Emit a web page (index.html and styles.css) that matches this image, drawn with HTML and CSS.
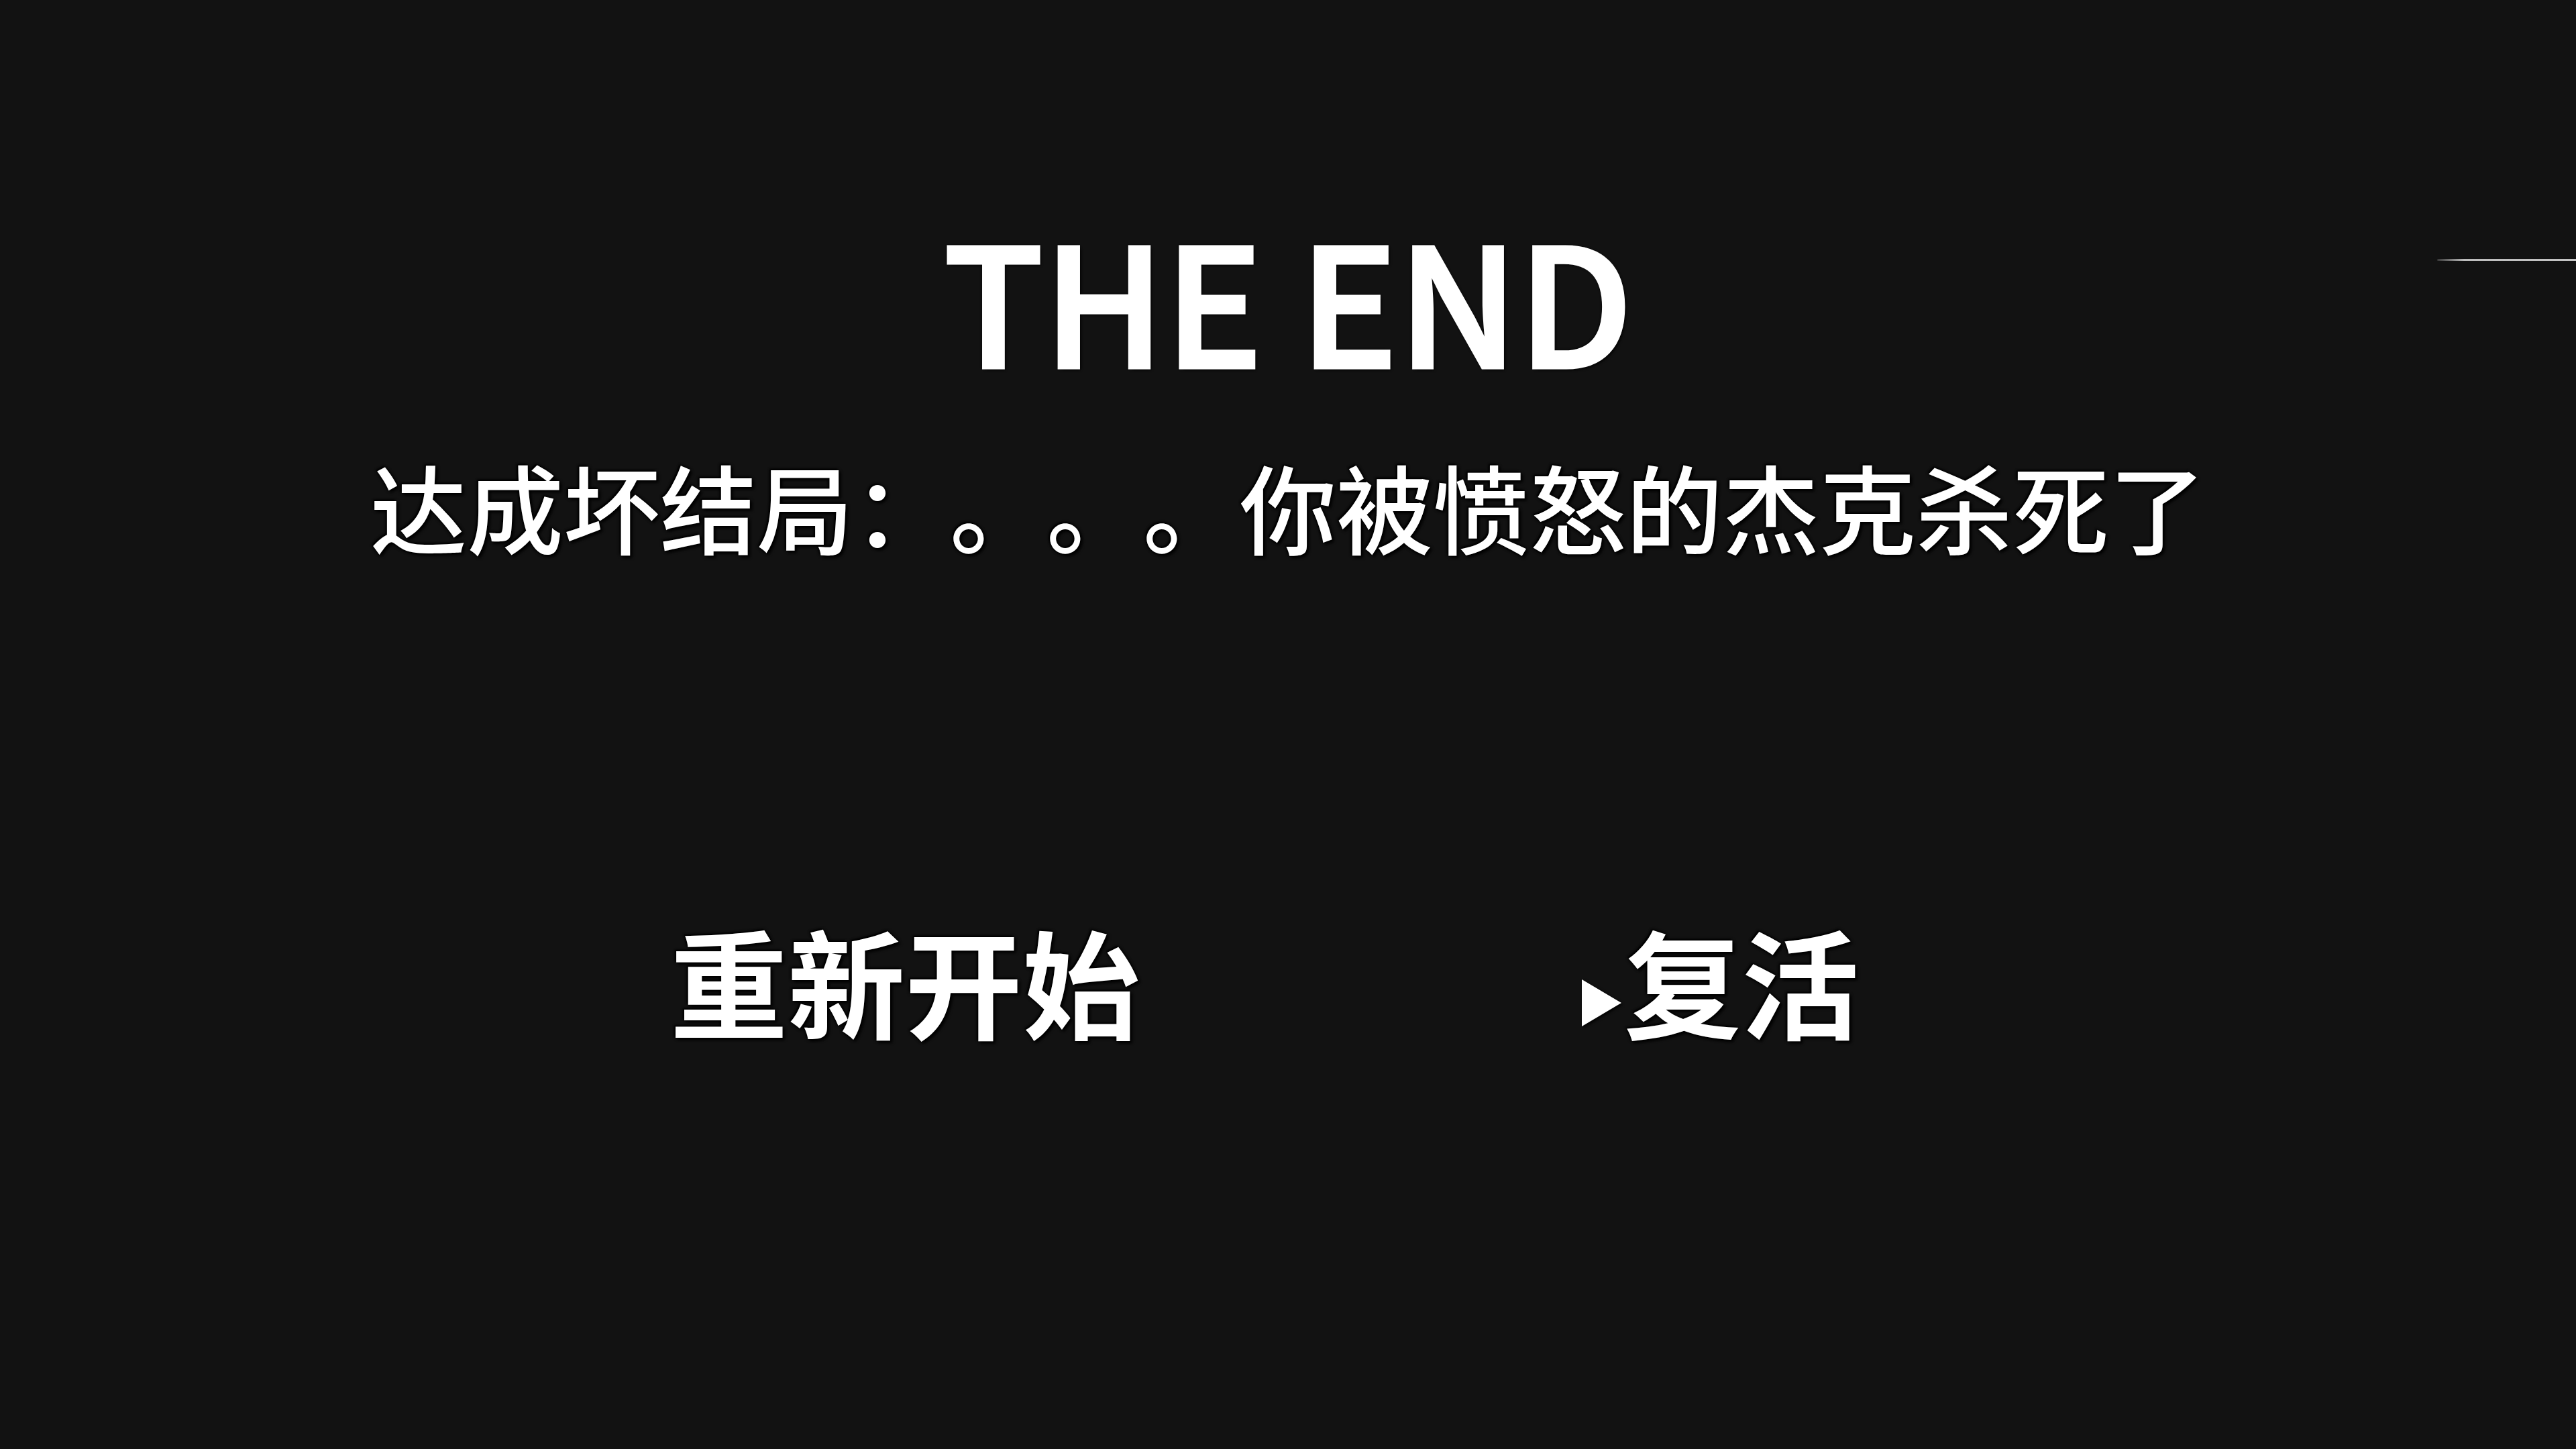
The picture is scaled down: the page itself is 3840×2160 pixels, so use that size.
FILE: index.html
```html
<!DOCTYPE html>
<html lang="zh-CN">
<head>
<meta charset="utf-8">
<title>THE END</title>
<link rel="stylesheet" href="styles.css">
</head>
<body>
<div class="screen">
  <div class="edge-line"></div>
  <h1 class="title">THE END</h1>
  <p class="ending">达成坏结局：。。。你被愤怒的杰克杀死了</p>
  <div class="menu">
    <div class="option restart">重新开始</div>
    <div class="option revive selected"><span class="cursor"></span>复活</div>
  </div>
</div>
</body>
</html>
```

FILE: styles.css
```css
html, body {
  margin: 0;
  padding: 0;
  background: #121212;
}

.screen {
  position: relative;
  width: 3840px;
  height: 2160px;
  overflow: hidden;
  display: flex;
  flex-direction: column;
  align-items: center;
  color: #ffffff;
  font-family: "Noto Sans CJK SC", "Noto Sans", sans-serif;
  text-shadow: 0 0 5px #000, 3px 3px 4px #000, -2px -2px 3px #000;
  text-spacing-trim: space-all;
}

.title {
  margin: 320px 0 0 0;
  font-size: 244px;
  font-weight: 500;
  line-height: 1;
  letter-spacing: 0;
  -webkit-text-stroke: 5px #ffffff;
}

.ending {
  margin: 117px 0 0 0;
  font-size: 144px;
  font-weight: 500;
  line-height: 1;
  text-spacing-trim: space-all;
}

.menu {
  margin-top: 547px;
  display: flex;
  align-items: center;
  gap: 659px;
  padding-right: 70px;
}

.option {
  font-size: 175px;
  font-weight: 700;
  line-height: 1;
  display: flex;
  align-items: center;
}

.cursor {
  width: 0;
  height: 0;
  border-top: 35px solid transparent;
  border-bottom: 35px solid transparent;
  border-left: 59px solid #ffffff;
  margin-right: 4px;
  margin-top: 70px;
  filter: drop-shadow(2px 2px 2px #000);
}

.edge-line {
  position: absolute;
  top: 386px;
  left: 3633px;
  right: 0;
  height: 3px;
  background: linear-gradient(90deg, rgba(200,200,200,0.2) 0, #bdbdbd 40px, #c4c4c4 100%);
  border-radius: 3px 0 0 3px;
}
```
